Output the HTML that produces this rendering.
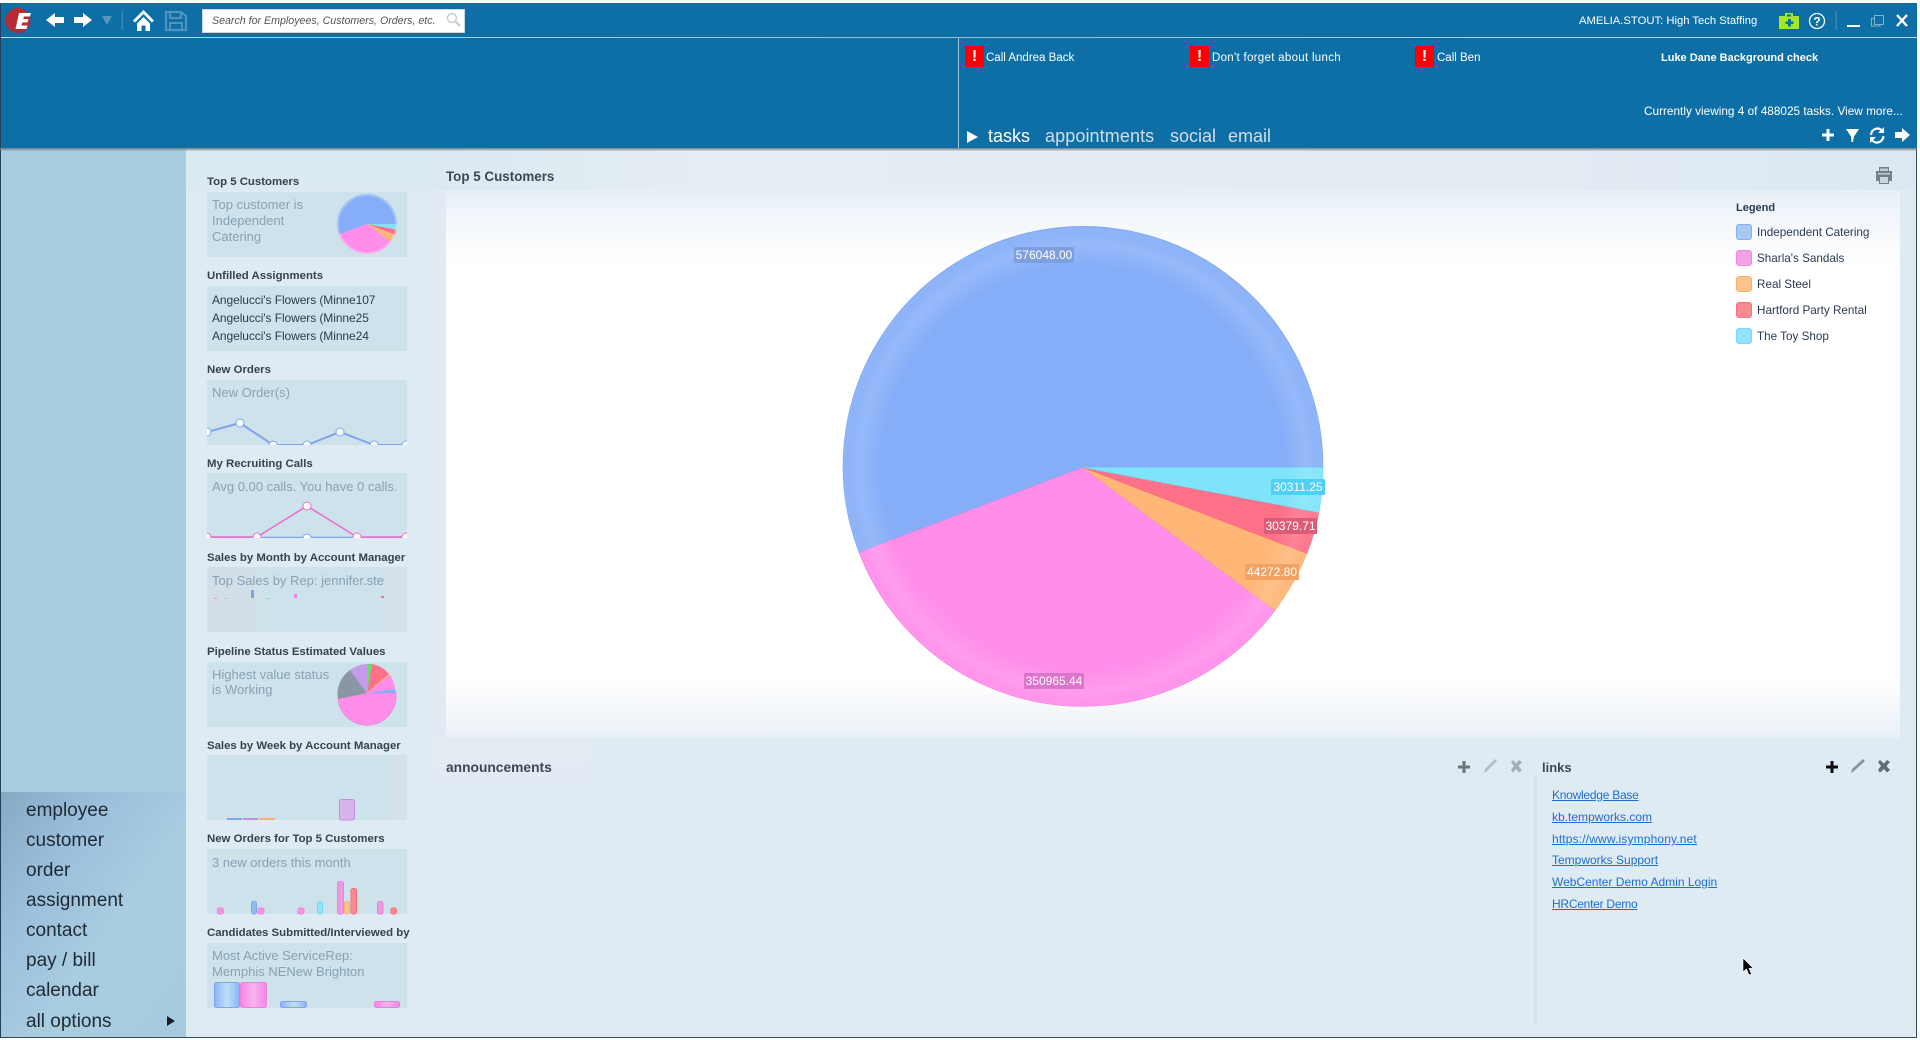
<!DOCTYPE html>
<html><head><meta charset="utf-8"><title>Dashboard</title>
<style>
html,body{margin:0;padding:0;width:1920px;height:1040px;overflow:hidden;background:#fff}
body{position:relative;font-family:"Liberation Sans",sans-serif}
.a{position:absolute}
.t{position:absolute;white-space:nowrap;line-height:16px;margin-top:-8px}
.w{font-size:12px;color:#fff}
.wt{font-size:11.4px;font-weight:bold;color:#38424c;left:207px}
.box{position:absolute;left:207px;width:200px;height:65px;background:#cde2ea}
.g{font-size:13px;color:#87a1b5;left:212px}
.d{font-size:12px;color:#2c3c50;left:212px;letter-spacing:-.08px}
.n{font-size:19px;color:#1f2a33;left:26px;line-height:24px;margin-top:-12px}
.l{font-size:12px;color:#1b6fd0;left:1552px;text-decoration:underline}
.lg{font-size:11.7px;color:#2a3a52;left:1760px}
.sw{position:absolute;left:1736px;width:14px;height:14px;border-radius:3px;border:1px solid}
.tab{font-size:18px;color:#cfdfe9}
.pl{font-size:12px;color:#fff;text-align:center;height:16px;line-height:16px;position:absolute;border-radius:1px}
.rs{position:absolute;width:19px;height:21px;background:#fb0000;top:46px;color:#fff;font-weight:bold;font-size:16px;line-height:21px;text-align:center}
</style></head><body>
<!-- window frame -->
<div class="a" style="left:0;top:3px;width:1917px;height:1035px;background:#dfebf3;border-left:1px solid #22405a;border-bottom:1px solid #3a4a55;border-right:1px solid #3a4a55;box-sizing:border-box"></div>
<!-- left column -->
<div class="a" style="left:1px;top:148px;width:185px;height:644px;background:#a9cde0"></div>
<div class="a" style="left:1px;top:792px;width:185px;height:245px;background:linear-gradient(125deg,#86aac4 0%,#9cbfdc 30%,#a9cde0 60%,#a6cade 100%)"></div>
<!-- main upper band -->
<div class="a" style="left:186px;top:148px;width:1730px;height:42px;background:linear-gradient(90deg,#dbe9f1 0,#dbe9f1 14%,#e6edf4 30%,#e3ebf3 80%,#dbe8f1 100%)"></div>
<div class="a" style="left:430px;top:190px;width:16px;height:560px;background:#e2ebf3"></div>
<div class="a" style="left:430px;top:738px;width:160px;height:90px;background:linear-gradient(180deg,#e4ebf3,#dfebf3)"></div>
<!-- chart white -->
<div class="a" style="left:446px;top:190px;width:1454px;height:548px;background:linear-gradient(180deg,#e6eff6 0,#f3f7fb 30px,#fcfdfe 60px,#fff 80px,#fff 490px,#f8fafc 510px,#e9f0f6 548px)"></div>
<!-- header -->
<div class="a" style="left:1px;top:3px;width:1916px;height:145px;background:#0d6fa5"></div>
<div class="a" style="left:1px;top:37px;width:1916px;height:1px;background:linear-gradient(90deg,#bcd8e8,#8fc0da 50%,#bcd8e8)"></div>
<div class="a" style="left:958px;top:38px;width:1px;height:110px;background:#9cc4da"></div>
<div class="a" style="left:0;top:148px;width:1917px;height:3px;background:linear-gradient(180deg,#6d7f8b,rgba(120,140,155,.15))"></div>

<!-- toolbar search -->
<div class="a" style="left:202px;top:9px;width:261px;height:22px;background:#fff;border:1px solid #c8d6e0"></div>
<div class="t" style="left:212px;top:21px;font-size:10.65px;font-style:italic;color:#555">Search for Employees, Customers, Orders, etc.</div>

<!-- header text -->
<div class="t w" style="left:1579px;top:21px;font-size:11.25px">AMELIA.STOUT: High Tech Staffing</div>
<div class="rs" style="left:965px">!</div>
<div class="t w" style="left:986px;top:58px;font-size:11.5px">Call Andrea Back</div>
<div class="rs" style="left:1190px">!</div>
<div class="t w" style="left:1212px;top:58px;font-size:11.5px;letter-spacing:.3px">Don't forget about lunch</div>
<div class="rs" style="left:1415px">!</div>
<div class="t w" style="left:1437px;top:58px;font-size:11.5px">Call Ben</div>
<div class="t w" style="left:1661px;top:58px;font-size:11px;font-weight:bold">Luke Dane Background check</div>
<div class="t w" style="left:1644px;top:111px;font-size:11.8px">Currently viewing 4 of 488025 tasks. View more...</div>
<div class="t tab" style="left:988px;top:136px;color:#fff">tasks</div>
<div class="t tab" style="left:1045px;top:136px;letter-spacing:.1px">appointments</div>
<div class="t tab" style="left:1170px;top:136px">social</div>
<div class="t tab" style="left:1228px;top:136px">email</div>

<!-- widgets -->
<div class="t wt" style="top:182px">Top 5 Customers</div><div class="box" style="top:192px"></div>
<div class="t g" style="top:205px">Top customer is</div><div class="t g" style="top:221px">Independent</div><div class="t g" style="top:237px">Catering</div>
<div class="t wt" style="top:276px">Unfilled Assignments</div><div class="box" style="top:286px"></div>
<div class="t d" style="top:300px">Angelucci's Flowers (Minne107</div><div class="t d" style="top:318px">Angelucci's Flowers (Minne25</div><div class="t d" style="top:336px">Angelucci's Flowers (Minne24</div>
<div class="t wt" style="top:370px">New Orders</div><div class="box" style="top:380px"></div>
<div class="t g" style="top:393px">New Order(s)</div>
<div class="t wt" style="top:464px">My Recruiting Calls</div><div class="box" style="top:473px"></div>
<div class="t g" style="top:487px">Avg 0.00 calls. You have 0 calls.</div>
<div class="t wt" style="top:558px">Sales by Month by Account Manager</div><div class="box" style="top:567px;background:linear-gradient(90deg,#d2dfe9 0,#d2dfe9 25%,#cde2ea 26%,#cde2ea 88%,#d6e0ea 89%)"></div>
<div class="t g" style="top:581px">Top Sales by Rep: jennifer.ste</div>
<div class="t wt" style="top:652px">Pipeline Status Estimated Values</div><div class="box" style="top:662px"></div>
<div class="t g" style="top:675px">Highest value status</div><div class="t g" style="top:690px">is Working</div>
<div class="t wt" style="top:746px">Sales by Week by Account Manager</div><div class="box" style="top:755px;background:linear-gradient(90deg,#cde2ea 0,#cde2ea 92%,#d6e0ea 93%)"></div>
<div class="t wt" style="top:839px">New Orders for Top 5 Customers</div><div class="box" style="top:849px"></div>
<div class="t g" style="top:863px">3 new orders this month</div>
<div class="t wt" style="top:933px">Candidates Submitted/Interviewed by</div><div class="box" style="top:943px"></div>
<div class="t g" style="top:956px">Most Active ServiceRep:</div><div class="t g" style="top:972px">Memphis NENew Brighton</div>

<!-- nav -->
<div class="t n" style="top:811px">employee</div>
<div class="t n" style="top:841px">customer</div>
<div class="t n" style="top:871px">order</div>
<div class="t n" style="top:901px">assignment</div>
<div class="t n" style="top:931px">contact</div>
<div class="t n" style="top:961px">pay / bill</div>
<div class="t n" style="top:991px">calendar</div>
<div class="t n" style="top:1022px">all options</div>

<!-- main titles -->
<div class="t" style="left:446px;top:177px;font-size:13.4px;font-weight:bold;color:#3c4854">Top 5 Customers</div>
<div class="t" style="left:446px;top:768px;font-size:13.8px;font-weight:bold;color:#3c4854">announcements</div>
<div class="t" style="left:1542px;top:768px;font-size:13px;font-weight:bold;color:#3c4854">links</div>
<div class="a" style="left:1534px;top:775px;width:3px;height:250px;background:#d2e3ed"></div>
<div class="t l" style="top:795px;letter-spacing:-.25px">Knowledge Base</div>
<div class="t l" style="top:817px">kb.tempworks.com</div>
<div class="t l" style="top:839px;letter-spacing:.15px">https://www.isymphony.net</div>
<div class="t l" style="top:860px">Tempworks Support</div>
<div class="t l" style="top:882px">WebCenter Demo Admin Login</div>
<div class="t l" style="top:904px;letter-spacing:-.25px">HRCenter Demo</div>

<!-- legend -->
<div class="t" style="left:1736px;top:208px;font-size:11px;font-weight:bold;color:#2a3a52">Legend</div>
<div class="sw" style="top:224px;background:#a6c8f2;border-color:#82b0ee"></div><div class="t lg" style="left:1757px;top:233px">Independent Catering</div>
<div class="sw" style="top:250px;background:#f0a4e6;border-color:#f884e2"></div><div class="t lg" style="left:1757px;top:259px">Sharla's Sandals</div>
<div class="sw" style="top:276px;background:#fcc48c;border-color:#fbb274"></div><div class="t lg" style="left:1757px;top:285px">Real Steel</div>
<div class="sw" style="top:302px;background:#f98a8e;border-color:#f87088"></div><div class="t lg" style="left:1757px;top:311px">Hartford Party Rental</div>
<div class="sw" style="top:328px;background:#92e4fb;border-color:#74dcf8"></div><div class="t lg" style="left:1757px;top:337px">The Toy Shop</div>

<!-- graphics -->
<svg class="a" style="left:0;top:0" width="1920" height="1040" viewBox="0 0 1920 1040">
<defs>
<radialGradient id="ring" gradientUnits="userSpaceOnUse" cx="1083" cy="467" r="240.500">
<stop offset="0.84" stop-color="#fff" stop-opacity="0"/><stop offset="0.93" stop-color="#fff" stop-opacity=".14"/><stop offset="0.97" stop-color="#fff" stop-opacity=".06"/><stop offset="1" stop-color="#fff" stop-opacity=".08"/>
</radialGradient>
<linearGradient id="gl" x1="0" x2="1" y1="0" y2="0"><stop offset="0" stop-color="#8cb4f4"/><stop offset=".5" stop-color="#bfe0f8"/><stop offset="1" stop-color="#8cb4f4"/></linearGradient>
<linearGradient id="gp" x1="0" x2="1" y1="0" y2="0"><stop offset="0" stop-color="#f586e6"/><stop offset=".5" stop-color="#f8b4ee"/><stop offset="1" stop-color="#f586e6"/></linearGradient>
<clipPath id="c1"><rect x="207" y="380" width="200" height="65"/></clipPath>
<clipPath id="c2"><rect x="207" y="473" width="200" height="65"/></clipPath>
</defs>
<!-- big pie -->
<g transform="translate(0,.5)">
<path d="M1083 467L1323 467A240 240 0 1 0 859 552Z" fill="#86aef8" stroke="#7da6ee" stroke-width=".6"/>
<path d="M1083 467L859 552A240 240 0 0 0 1275 610Z" fill="#ff8eea" stroke="#ef80dc" stroke-width=".6"/>
<path d="M1083 467L1275 610A240 240 0 0 0 1307 553Z" fill="#ffb676" stroke="#f0a768" stroke-width=".5"/>
<path d="M1083 467L1307 553A240 240 0 0 0 1319 512Z" fill="#ff7089" stroke="#ee627c" stroke-width=".5"/>
<path d="M1083 467L1319 512A240 240 0 0 0 1323 467Z" fill="#7fe3fb" stroke="#64d8f6" stroke-width=".5"/>
<circle cx="1083" cy="467" r="240" fill="url(#ring)"/>
</g>
<!-- mini pie -->
<g transform="translate(367,224) scale(.125) translate(-1083,-467)">
<path d="M1083 467L1323 467A240 240 0 1 0 859 552Z" fill="#86aef8"/>
<path d="M1083 467L859 552A240 240 0 0 0 1275 610Z" fill="#ff8eea"/>
<path d="M1083 467L1275 610A240 240 0 0 0 1307 553Z" fill="#ffb676"/>
<path d="M1083 467L1307 553A240 240 0 0 0 1319 512Z" fill="#ff7089"/>
<path d="M1083 467L1319 512A240 240 0 0 0 1323 467Z" fill="#7fe3fb"/>
<circle cx="1083" cy="467" r="232" fill="none" stroke="#fff" stroke-opacity=".25" stroke-width="16"/>
</g>
<!-- pipeline pie -->
<g transform="translate(367,693)">
<path d="M0 0L29 0A29 29 0 1 1 -29 6Z" fill="#ff8eea" stroke="#ec78d8" stroke-width=".6"/>
<path d="M0 0L-29 6A29 29 0 0 1 -17 -23Z" fill="#8a96a4"/>
<path d="M0 0L-17 -23A29 29 0 0 1 0 -29Z" fill="#c59cec"/>
<path d="M0 0L0 -29A29 29 0 0 1 5 -29Z" fill="#66e06c"/>
<path d="M0 0L5 -29A29 29 0 0 1 22 -19Z" fill="#ff7089"/>
<path d="M0 0L22 -19A29 29 0 0 1 23 -18Z" fill="#ffb676"/>
<path d="M0 0L23 -18A29 29 0 0 1 28 -4Z" fill="#ff8eea"/>
<path d="M0 0L28 -4A29 29 0 0 1 29 0Z" fill="#86aef8"/>
</g>
<!-- new orders spark -->
<g clip-path="url(#c1)">
<polyline points="207,432 240,423 273,445 307,445 340,432 374,445 406,445" fill="none" stroke="#7fa5ee" stroke-width="2"/>
<g fill="#fff" stroke="#7fa5ee" stroke-width="1">
<circle cx="207" cy="432" r="4"/><circle cx="240" cy="423" r="4"/><circle cx="273" cy="445" r="4"/><circle cx="307" cy="445" r="4"/><circle cx="340" cy="432" r="4"/><circle cx="374" cy="445" r="4"/><circle cx="406" cy="445" r="4"/></g>
</g>
<!-- calls spark -->
<g clip-path="url(#c2)">
<line x1="207" y1="537.500" x2="407" y2="537.500" stroke="#7fa5ee" stroke-width="1.500"/>
<polyline points="207,537 257,537 307,506 357,537 407,537" fill="none" stroke="#ea6fd0" stroke-width="1.600"/>
<circle cx="307" cy="538" r="4" fill="#fff" stroke="#7fa5ee"/>
<g fill="#fff" stroke="#ea6fd0"><circle cx="207" cy="537" r="4"/><circle cx="257" cy="537" r="4"/><circle cx="307" cy="506" r="4"/><circle cx="357" cy="537" r="4"/><circle cx="406" cy="537" r="4"/></g>
</g>
<!-- sales by month -->
<rect x="214" y="598" width="3" height="1" fill="#f38de6"/><rect x="225" y="598" width="3" height="1" fill="#7fd8f4"/><rect x="251" y="590" width="3" height="8" fill="#7ea6e6"/><rect x="267" y="598" width="3" height="1" fill="#74e07c"/><rect x="294" y="594" width="3" height="4" fill="#f384e2"/><rect x="381" y="596" width="3" height="2" fill="#f8708a"/>
<!-- sales by week -->
<rect x="339.500" y="799.500" width="15" height="20.500" rx="2" fill="#d8b4ec" stroke="#c48fe0"/>
<rect x="227" y="818" width="15" height="2" fill="#7ea6ee"/><rect x="243" y="818" width="15" height="2" fill="#c48fe0"/><rect x="259" y="818" width="16" height="2" fill="#f5b176"/>
<!-- new orders top 5 -->
<g stroke-width="1">
<rect x="217.500" y="908" width="6" height="6" rx="2" fill="#ef9ae0" stroke="#f080da"/>
<rect x="251.500" y="901.500" width="5" height="12.500" rx="2" fill="#90bcf0" stroke="#7ea6ee"/>
<rect x="258" y="908" width="6" height="6" rx="2" fill="#ef9ae0" stroke="#f080da"/>
<rect x="298" y="908" width="6" height="6" rx="2" fill="#ef9ae0" stroke="#f080da"/>
<rect x="317.500" y="901.500" width="5" height="12.500" rx="2" fill="#96e4f8" stroke="#70d8f4"/>
<rect x="337.500" y="881.500" width="6" height="32.500" rx="2" fill="#ef9ae0" stroke="#f080da"/>
<rect x="344.500" y="901.500" width="5" height="12.500" rx="2" fill="#fcc48c" stroke="#f5b176"/>
<rect x="351" y="888.500" width="5.500" height="25.500" rx="2" fill="#f98a8e" stroke="#f87080"/>
<rect x="377.500" y="901.500" width="5.500" height="12.500" rx="2" fill="#ef9ae0" stroke="#f080da"/>
<rect x="391" y="908" width="5.500" height="6" rx="2" fill="#f98a8e" stroke="#f87080"/>
</g>
<!-- candidates -->
<rect x="214.500" y="982.500" width="25" height="25" rx="2" fill="url(#gl)" stroke="#7ea6ee"/>
<rect x="240.500" y="982.500" width="26" height="25" rx="2" fill="url(#gp)" stroke="#f080da"/>
<rect x="280.500" y="1001.500" width="26" height="6" rx="2" fill="url(#gl)" stroke="#7ea6ee"/>
<rect x="374.500" y="1001.500" width="25" height="6" rx="2" fill="url(#gp)" stroke="#f080da"/>

<!-- logo -->
<circle cx="18" cy="20.500" r="12.500" fill="#b52a33"/>
<path d="M19 13H31L30 16.500H24L23.300 19H28.500L27.500 22.500H22.300L21.500 25.500H27.500L26.500 29H15.500Z" fill="#fff"/>
<!-- back / forward -->
<path d="M46 20L55 13V17H64V23H55V27Z" fill="#fff"/>
<path d="M92 20L83 13V17H74V23H83V27Z" fill="#fff"/>
<path d="M102 16H112L107 25Z" fill="#5a95bb"/>
<rect x="121.500" y="11" width="1.500" height="19" fill="#3f86b0"/>
<!-- home -->
<path d="M143.500 10L133 20.500L135 22.500L143.500 14L152 22.500L154 20.500ZM137 23.500V31H141.500V25.500H145.500V31H150V23.500L143.500 17Z" fill="#fff"/>
<!-- save -->
<path d="M166 12H181L186 16V30H166Z" fill="none" stroke="#4f94bf" stroke-width="2.200"/>
<path d="M170 12V18H181V12M170 30V23H182V30" fill="none" stroke="#4f94bf" stroke-width="2"/>
<!-- search glass -->
<circle cx="452" cy="18" r="4.500" fill="none" stroke="#c8ccd0" stroke-width="1.500"/>
<line x1="455.500" y1="21.500" x2="460" y2="26" stroke="#c8ccd0" stroke-width="2.200"/>
<!-- medkit -->
<path d="M1779 16H1785V13H1793V16H1799V29H1779Z" fill="#a4e62c"/>
<rect x="1787" y="14.500" width="4" height="2" fill="#0d6fa5"/>
<path d="M1788 19H1791V21.500H1793.500V24H1791V26.500H1788V24H1785.500V21.500H1788Z" fill="#0d6fa5"/>
<!-- help -->
<circle cx="1817" cy="21" r="7.500" fill="none" stroke="#fff" stroke-width="1.300"/>
<text x="1817" y="25.500" font-size="12" font-weight="bold" text-anchor="middle" fill="#fff" font-family="Liberation Sans">?</text>
<rect x="1835.500" y="11" width="1.500" height="19" fill="#3f86b0"/>
<!-- window buttons -->
<rect x="1847" y="25" width="13" height="2" fill="#fff"/>
<rect x="1874.500" y="15.500" width="9" height="9" fill="none" stroke="#7db2d0"/>
<path d="M1874 18.500H1871.500V26H1880V24.500" fill="none" stroke="#7db2d0"/>
<path d="M1897 15L1907 26M1907 15L1897 26" stroke="#fff" stroke-width="2.400" fill="none"/>
<!-- task tab triangle -->
<path d="M967 131L978 137L967 143Z" fill="#fff"/>
<!-- right icons -->
<path d="M1826.500 129H1829.500V133.500H1834V136.500H1829.500V141H1826.500V136.500H1822V133.500H1826.500Z" fill="#fff"/>
<path d="M1846 129H1859L1854 136.500L1853 142L1851.500 142L1851 136.500Z" fill="#fff"/>
<path d="M1871 135A6.500 7 0 0 1 1882 130.500M1883.500 136A6.500 7 0 0 1 1872 140" fill="none" stroke="#fff" stroke-width="2.200"/>
<path d="M1884 127V133H1878ZM1870 143V137H1876Z" fill="#fff"/>
<path d="M1910 135L1902 128V132H1895V138H1902V142Z" fill="#fff"/>
<!-- printer -->
<path d="M1879 167H1889V171H1892V181H1889V184H1879V181H1876V171H1879Z" fill="#727e8a"/>
<rect x="1880" y="168.500" width="8" height="2.500" fill="#c0ccd6"/><rect x="1878" y="173" width="12" height="1.500" fill="#c0ccd6"/><rect x="1880" y="177" width="8" height="6" fill="#cbd6df"/>
<!-- panel actions -->
<path d="M1462.500 761H1465.500V765.500H1470V768.500H1465.500V773H1462.500V768.500H1458V765.500H1462.500Z" fill="#6c737a"/>
<path d="M1484 773L1485 769L1495 759L1497 761L1487 771Z" fill="#b4bcc4"/>
<path d="M1511 762L1513 760L1516 763.500L1519 760L1522 762L1518.500 766L1522 770L1519 772.500L1516 769L1513 772.500L1511 770L1514 766Z" fill="#a4acb4"/>
<path d="M1830.500 761H1833.500V765.500H1838V768.500H1833.500V773H1830.500V768.500H1826V765.500H1830.500Z" fill="#0c0c0e"/>
<path d="M1851 773L1852 769L1863 759L1865 761L1854 771Z" fill="#8a929a"/>
<path d="M1878 762L1880 760L1884 763.500L1887 760L1890 762L1886.500 766L1890 770L1887 772.500L1884 769L1880 772.500L1878 770L1881 766Z" fill="#656c74"/>
<!-- all options arrow -->
<path d="M167 1016L175 1021L167 1026Z" fill="#1c1e22"/>
<!-- cursor -->
<path d="M1743 958V972L1746.500 969L1749 975L1751.500 974L1749 968.500L1753 968Z" fill="#000" stroke="#fff" stroke-width=".6"/>
</svg>

<!-- pie labels -->
<div class="pl" style="left:1014px;top:247px;width:60px;background:#7d9fdc">576048.00</div>
<div class="pl" style="left:1024px;top:673px;width:60px;background:#dc74cc">350965.44</div>
<div class="pl" style="left:1245px;top:564px;width:54px;background:#f2a262">44272.80</div>
<div class="pl" style="left:1264px;top:518px;width:53px;background:#dc5c78">30379.71</div>
<div class="pl" style="left:1271px;top:479px;width:54px;background:#4fd0f4">30311.25</div>
</body></html>
